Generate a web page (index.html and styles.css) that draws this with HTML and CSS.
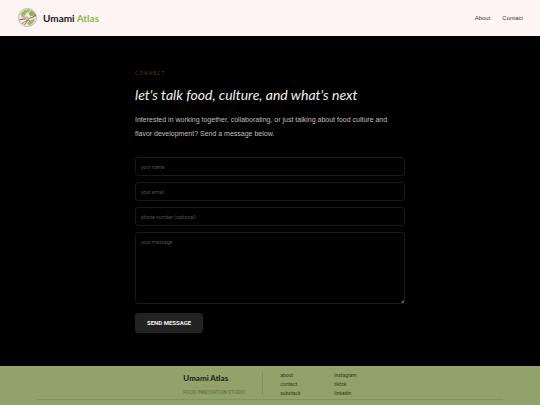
FILE: index.html
```html
<!DOCTYPE html>
<html lang="en">
  <head>
    <meta charset="utf-8">
    <title>Contact | Umami Atlas</title>
    <meta name="viewport" content="width=device-width, initial-scale=1">
    <link rel="stylesheet" href="styles.css">
  </head>
  <body>
    <header class="site-header">
      <a class="brand" href="#">
        <svg class="brand-logo" viewBox="0 0 36 36" aria-hidden="true">
          <circle cx="18" cy="18" r="17" fill="#f3eee5" stroke="#b5a895" stroke-width="1.5" />
          <path d="M7 8 Q14 1 23 3 L21 8 L16 9 L14 14 L9 15 L5 12Z" fill="#9dbb6c" />
          <path d="M25 4 Q33 9 34 17 L29 14 L24 16 L20 11Z" fill="#8db160" />
          <path d="M4 10 L11 15 L18 18 L14 21 L6 16Z" fill="#a9c07e" />
          <path d="M22 24 L32 20 Q30 31 21 33 L17 30Z" fill="#9dbb6c" />
          <path d="M3 22 Q12 21 20 20 T34 13" fill="none" stroke="#8f6659" stroke-width="2" />
          <path d="M7 30 L20 21 M12 32 L20 22 L23 26" fill="none" stroke="#a9856d" stroke-width="2" />
          <path d="M16 15 L23 18 L20 22 L13 20Z" fill="#d8b9a5" />
        </svg>
        <span class="brand-name">Umami <span class="brand-accent">Atlas</span></span>
      </a>
      <nav class="site-nav">
        <a href="#">About</a>
        <a href="#contact">Contact</a>
      </nav>
    </header>

    <main class="contact" id="contact">
      <p class="eyebrow">CONNECT</p>
      <h1>let's talk food, culture, and what's next</h1>
      <p class="intro">Interested in working together, collaborating, or just talking about food culture and flavor development? Send a message below.</p>

      <form class="contact-form">
        <input type="text" name="name" placeholder="your name" aria-label="your name">
        <input type="email" name="email" placeholder="your email" aria-label="your email">
        <input type="tel" name="phone" placeholder="phone number (optional)" aria-label="phone number (optional)">
        <textarea name="message" placeholder="your message" aria-label="your message"></textarea>
        <button type="submit">SEND MESSAGE</button>
      </form>
    </main>

    <footer class="site-footer">
      <div class="footer-content">
        <div class="footer-brand">
          <span class="footer-name">Umami Atlas</span>
          <span class="footer-rule"></span>
          <span class="footer-tagline">FOOD INNOVATION STUDIO</span>
        </div>
        <div class="footer-links">
          <a href="#">about</a>
          <a href="#">instagram</a>
          <a href="#contact">contact</a>
          <a href="#">tiktok</a>
          <a href="#">substack</a>
          <a href="#">linkedin</a>
        </div>
      </div>
    </footer>
  </body>
</html>
```

FILE: styles.css
```css
* {
  box-sizing: border-box;
}

body {
  margin: 0;
  background: #000;
  font-family: "Liberation Sans", Arial, sans-serif;
}

a {
  color: inherit;
  text-decoration: none;
}

/* Header */
.site-header {
  display: flex;
  align-items: center;
  justify-content: space-between;
  padding: 8px 17px 9px 18px;
  background: #fdf4f4;
}

.brand {
  display: flex;
  align-items: center;
  gap: 6px;
}

.brand-logo {
  width: 19px;
  height: 19px;
}

.brand-name {
  color: #1c1719;
  font: bold 10px/12px Lato, sans-serif;
}

.brand-accent {
  color: #8bb850;
}

.site-nav {
  display: flex;
  gap: 12px;
  color: #40393b;
  font-size: 6px;
}

/* Contact */
.contact {
  max-width: 270px;
  margin: 0 auto;
  padding: 33px 0;
}

.eyebrow {
  margin: 0;
  color: #6b3b2b;
  font: 5px/8px "Open Sans", sans-serif;
  letter-spacing: 1px;
}

h1 {
  margin: 9px 0;
  color: #f4eeee;
  font: italic 14px/18px Lato, sans-serif;
}

.intro {
  margin: 0;
  color: #c4bebe;
  font-size: 7px;
  line-height: 14px;
}

.contact-form {
  display: flex;
  flex-direction: column;
  align-items: flex-start;
  gap: 6px;
  margin-top: 16px;
}

.contact-form input,
.contact-form textarea {
  width: 100%;
  padding: 5px;
  border: 1px solid #181818;
  border-radius: 3px;
  background: #000;
  color: #ddd;
  font: 5px/8px Roboto, sans-serif;
}

.contact-form input {
  height: 19px;
}

.contact-form textarea {
  height: 72px;
  resize: vertical;
}

.contact-form textarea::-webkit-resizer {
  background: linear-gradient(135deg, transparent 88%, #555 88%);
}

.contact-form ::placeholder {
  color: #505050;
}

.contact-form button {
  margin-top: 3px;
  padding: 6px 12px;
  border: 0;
  border-radius: 3px;
  background: #222;
  color: #f4eeee;
  font: bold 6px/8px Roboto, sans-serif;
}

/* Footer */
.site-footer {
  padding: 5px 37px;
  background: #91a36a;
}

.footer-content {
  display: flex;
  justify-content: center;
  gap: 17px;
  border-bottom: 1px solid #82935f;
}

.footer-brand {
  display: flex;
  flex-direction: column;
  margin: 1px 0 4px;
  padding-right: 17px;
  border-right: 1px solid #a18352;
}

.footer-name {
  color: #18200e;
  font: bold 8px/12px Lato, sans-serif;
}

.footer-rule {
  width: 17px;
  height: 1px;
  margin: 2px 0 2px 21px;
  background: #a29459;
}

.footer-tagline {
  color: #596740;
  font: 5px/6px Roboto, sans-serif;
}

.footer-links {
  display: grid;
  grid-template-columns: 54px auto;
  align-content: start;
  color: #303b20;
  font: 5px/9px Roboto, sans-serif;
}
```
